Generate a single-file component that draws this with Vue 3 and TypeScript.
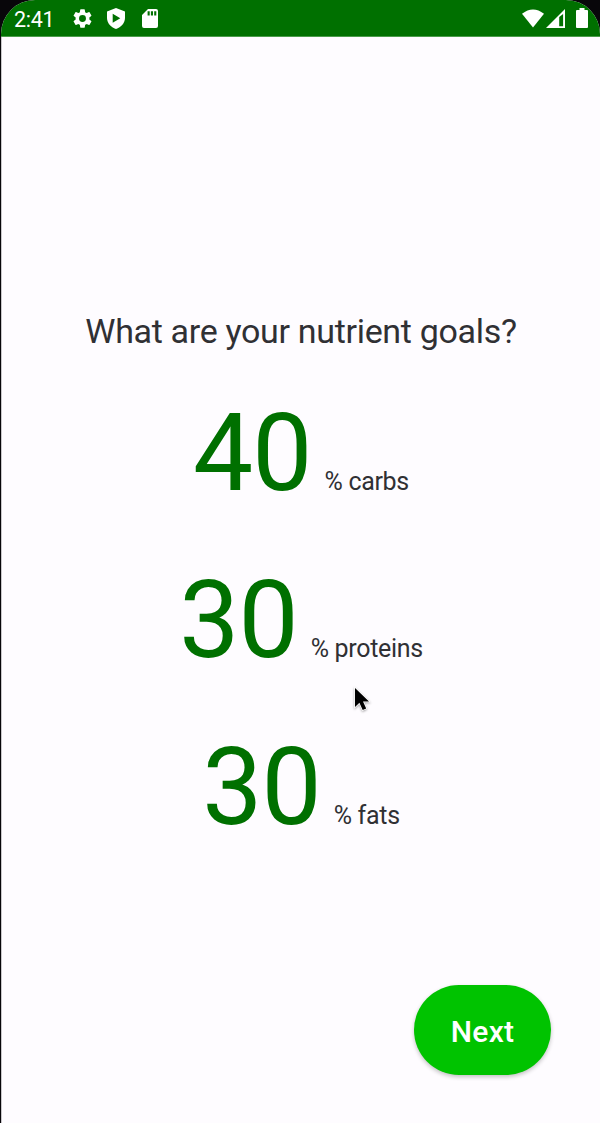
<script setup lang="ts">
interface Goal {
  name: string
  percent: number
}

const goals: Goal[] = [
  { name: 'carbs', percent: 40 },
  { name: 'proteins', percent: 30 },
  { name: 'fats', percent: 30 },
]
</script>

<template>
  <div class="device">
    <div class="screen">
      <header class="status">
        <span class="time">2:41</span>
        <svg class="gear" viewBox="0 0 24 24">
          <path fill-rule="evenodd" d="M19.14 12.94c.04-.3.06-.61.06-.94s-.02-.64-.07-.94l2.03-1.58a.5.5 0 0 0 .12-.61l-1.92-3.32a.49.49 0 0 0-.59-.22l-2.39.96a7 7 0 0 0-1.62-.94l-.36-2.54a.48.48 0 0 0-.48-.41h-3.84a.47.47 0 0 0-.47.41l-.36 2.54c-.59.24-1.13.57-1.62.94l-2.39-.96a.48.48 0 0 0-.59.22L2.74 8.87a.47.47 0 0 0 .12.61l2.03 1.58c-.05.3-.09.63-.09.94s.02.64.07.94l-2.03 1.58a.5.5 0 0 0-.12.61l1.92 3.32c.12.22.37.29.59.22l2.39-.96c.5.38 1.03.7 1.62.94l.36 2.54c.05.24.24.41.48.41h3.84c.24 0 .44-.17.47-.41l.36-2.54a7 7 0 0 0 1.62-.94l2.39.96c.22.08.47 0 .59-.22l1.92-3.32a.47.47 0 0 0-.12-.61zM12 15.6a3.6 3.6 0 1 1 0-7.2 3.6 3.6 0 0 1 0 7.2z" />
        </svg>
        <svg class="shield" viewBox="0 0 18 21">
          <path fill-rule="evenodd" d="M9 0 18 3.6V10c0 5-3.8 9.3-9 11C3.800 19.300 0 15 0 10V3.600zM5.700 5.800v9L13.300 10.300z" />
        </svg>
        <svg class="card" viewBox="0 0 16 19">
          <path fill-rule="evenodd" d="M6 0h8q2 0 2 2v15q0 2-2 2H2q-2 0-2-2V6zM5.600 2.200v4.300h2.100v-4.300zM8.900 2.200v4.300h2.100v-4.300zM12.200 2.200v4.300h2.100v-4.300z" />
        </svg>
        <span class="spacer"></span>
        <svg class="wifi" viewBox="0 0 23 19">
          <path d="M0 4.500Q11.500-4.500 23 4.500L11.500 19z" />
        </svg>
        <svg class="signal" viewBox="0 0 19 19">
          <path fill-rule="evenodd" d="M19 0v19H0zM13.200 8v9.200h3.900V5z" />
        </svg>
        <svg class="battery" viewBox="0 0 12 20">
          <path d="M3.500 0h5v2H11q1 0 1 1v16q0 1-1 1H1q-1 0-1-1V3q0-1 1-1h2.500z" />
        </svg>
      </header>
      <main class="content">
        <h1>What are your nutrient goals?</h1>
        <div v-for="goal in goals" :key="goal.name" class="goal">
          <span class="value">{{ goal.percent }}</span>
          <span class="unit">% {{ goal.name }}</span>
        </div>
        <button class="next" type="button">Next</button>
      </main>
    </div>
    <svg class="pointer" viewBox="0 0 18 26">
      <path d="M2 2v19l4.400-4.200 3.300 7.200 3.500-1.600-3.200-6.900h6z" />
    </svg>
  </div>
</template>

<style>
body {
  margin: 0;
  background: #08060a;
}
</style>

<style scoped>
.device {
  position: relative;
  box-sizing: border-box;
  width: 600px;
  height: 1123px;
  padding-left: 1px;
  background: #08060a;
  font-family: Roboto, sans-serif;
  overflow: hidden;
}

.screen {
  display: flex;
  flex-direction: column;
  height: 1123px;
  border-radius: 34px 34px 0 0;
  background: #fefcff;
  overflow: hidden;
}

.status {
  box-sizing: border-box;
  display: flex;
  flex: none;
  align-items: center;
  height: 37px;
  padding: 0 12px 0 13px;
  border-bottom: 1px solid #4b9c4b;
  background: #007000;
  color: #fff;
}

.status svg {
  display: block;
  flex: none;
  fill: #fff;
}

.time {
  width: 57px;
  padding-top: 3px;
  font-size: 21.5px;
  line-height: 33px;
  letter-spacing: -0.3px;
}

.gear {
  width: 23px;
  height: 23px;
}

.shield {
  width: 18px;
  height: 21px;
  margin-left: 13px;
}

.card {
  width: 16px;
  height: 19px;
  margin-left: 17px;
}

.spacer {
  flex: 1;
}

.wifi {
  width: 22px;
  height: 19px;
}

.signal {
  width: 19px;
  height: 19px;
  margin-left: 2px;
}

.battery {
  width: 12px;
  height: 20px;
  margin-left: 11px;
}

.content {
  display: flex;
  flex: 1;
  flex-direction: column;
  align-items: center;
  padding-top: 270px;
  border-left: 1px solid #c9c7ca;
}

h1 {
  margin: 0 0 21px;
  color: #303034;
  font-size: 34px;
  font-weight: 400;
  line-height: 48px;
  letter-spacing: -0.32px;
  white-space: nowrap;
}

.goal {
  display: flex;
  align-items: baseline;
  height: 167px;
  white-space: nowrap;
}

.value {
  color: #007000;
  font-size: 107px;
  line-height: 156px;
  letter-spacing: -0.9px;
}

.unit {
  margin-left: 13px;
  color: #303034;
  font-size: 25px;
  letter-spacing: -0.32px;
}

.next {
  flex: none;
  align-self: flex-end;
  width: 137px;
  height: 90px;
  margin: auto 49px 48px 0;
  padding: 2px 0 0;
  border: 0;
  border-radius: 45px;
  background: #00c300;
  box-shadow: 0 2px 4px rgba(0, 0, 0, 0.24);
  color: #fff;
  font-family: inherit;
  font-size: 30px;
  font-weight: 500;
  letter-spacing: 0.3px;
}

.pointer {
  position: absolute;
  top: 686px;
  left: 353px;
  width: 18px;
  height: 26px;
  fill: #000;
  stroke: #fff;
  stroke-width: 1.5;
  paint-order: stroke;
  filter: drop-shadow(0 1px 1px rgba(0, 0, 0, 0.35));
}
</style>
